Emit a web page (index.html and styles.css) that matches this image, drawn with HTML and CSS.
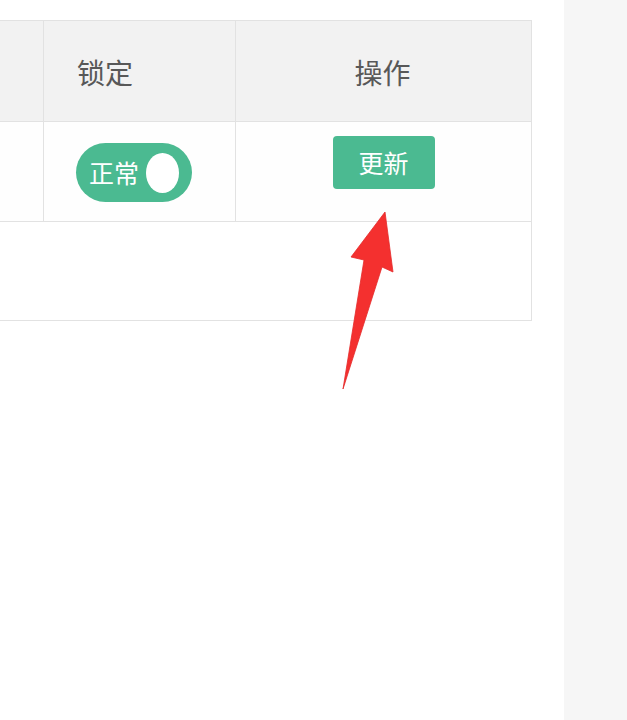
FILE: index.html
```html
<!DOCTYPE html>
<html lang="zh-CN">
<head>
<meta charset="utf-8">
<title>表格</title>
<link rel="stylesheet" href="styles.css">
</head>
<body>
<div class="page">
  <main class="main">
    <div class="table">
      <div class="cell head"></div>
      <div class="cell head lock-head">锁定</div>
      <div class="cell head op-head">操作</div>

      <div class="cell body"></div>
      <div class="cell body lock-cell">
        <span class="switch"><span class="switch-text">正常</span><span class="knob"></span></span>
      </div>
      <div class="cell body op-cell">
        <button class="btn">更新</button>
      </div>

      <div class="cell footer"></div>
    </div>
    <svg class="arrow" width="60" height="185" viewBox="340 208 60 185" aria-hidden="true">
      <polygon points="385,212 393,272 382,267 343,389 364,260 351,257" fill="#f4302f" stroke="#e52a2a" stroke-width="0.8" stroke-linejoin="round"/>
    </svg>
  </main>
  <aside class="side"></aside>
</div>
</body>
</html>
```
FILE: styles.css
```css
html, body {
  margin: 0;
  padding: 0;
  background: #ffffff;
  font-family: "Noto Sans CJK SC", "Noto Sans", sans-serif;
}

.page {
  display: flex;
  height: 720px;
  overflow: hidden;
}

.main {
  position: relative;
  width: 564px;
  flex: none;
  padding-top: 20px;
  overflow: hidden;
}

.side {
  flex: 1;
  background: #f6f6f6;
}

.table {
  display: grid;
  grid-template-columns: 55px 192px 295px;
  grid-template-rows: 101px 100px 99px;
  margin-left: -11px;
  width: 543px;
  border-top: 1px solid #e2e2e2;
  border-right: 1px solid #e2e2e2;
  box-sizing: border-box;
}

.cell {
  box-sizing: border-box;
  border-bottom: 1px solid #e2e2e2;
  border-right: 1px solid #e2e2e2;
}

.cell:nth-child(3),
.cell:nth-child(6) {
  border-right: none;
}

.head {
  background: #f2f2f2;
  color: #585858;
  font-size: 28px;
  display: flex;
  align-items: center;
  padding-top: 2px;
}

.lock-head {
  padding-left: 33px;
}

.op-head {
  justify-content: center;
  padding-right: 2px;
}

.body {
  background: #fefefe;
}

.lock-cell {
  display: flex;
  align-items: center;
  padding-left: 32px;
  padding-top: 2px;
}

.switch {
  display: inline-flex;
  align-items: center;
  justify-content: space-between;
  width: 116px;
  height: 59px;
  border-radius: 30px;
  background: #4bba91;
  box-sizing: border-box;
  padding: 0 13px 0 13px;
}

.switch-text {
  color: #ffffff;
  font-size: 25px;
  line-height: 1;
  margin-top: -1px;
}

.knob {
  width: 33px;
  height: 40px;
  border-radius: 50%;
  background: #ffffff;
}

.op-cell {
  display: flex;
  justify-content: center;
  align-items: flex-start;
  padding-top: 14px;
}

.btn {
  width: 102px;
  height: 53px;
  border: none;
  border-radius: 4px;
  background: #4bba91;
  color: #ffffff;
  font-family: "Noto Sans CJK SC", "Noto Sans", sans-serif;
  font-size: 25px;
  line-height: 1;
  padding: 0;
}

.footer {
  grid-column: 1 / span 3;
  border-right: none;
  background: #ffffff;
}

.arrow {
  position: absolute;
  left: 340px;
  top: 208px;
}
```
